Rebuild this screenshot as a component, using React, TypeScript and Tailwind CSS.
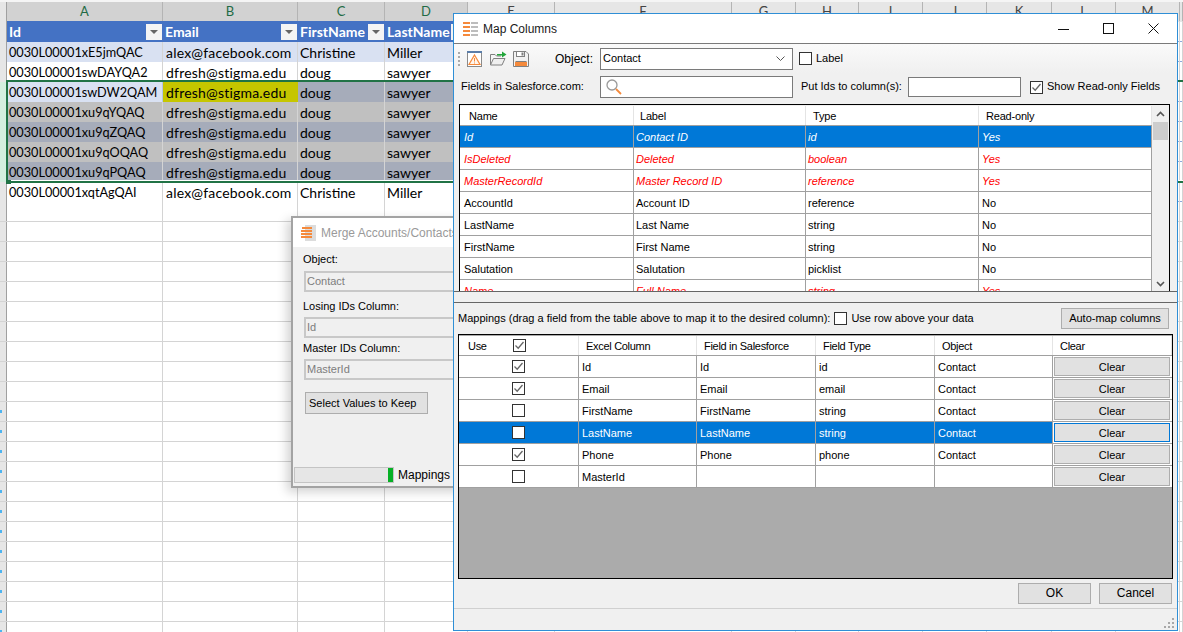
import React from "react";

const sheetRows = [
  ["0030L00001xE5jmQAC", "alex@facebook.com", "Christine", "Miller"],
  ["0030L00001swDAYQA2", "dfresh@stigma.edu", "doug", "sawyer"],
  ["0030L00001swDW2QAM", "dfresh@stigma.edu", "doug", "sawyer"],
  ["0030L00001xu9qYQAQ", "dfresh@stigma.edu", "doug", "sawyer"],
  ["0030L00001xu9qZQAQ", "dfresh@stigma.edu", "doug", "sawyer"],
  ["0030L00001xu9qOQAQ", "dfresh@stigma.edu", "doug", "sawyer"],
  ["0030L00001xu9qPQAQ", "dfresh@stigma.edu", "doug", "sawyer"],
  ["0030L00001xqtAgQAI", "alex@facebook.com", "Christine", "Miller"],
];

const rowColors = [
  "bg-[#d9e1f2]",
  "bg-white",
  "bg-[#a6acba]",
  "bg-[#c0c0c0]",
  "bg-[#a6acba]",
  "bg-[#c0c0c0]",
  "bg-[#a6acba]",
  "bg-white",
];

const letters = ["A", "B", "C", "D", "E", "F", "G", "H", "I", "J", "K", "L", "M", ""];
const gridCols =
  "grid grid-cols-[7px_156px_135px_87px_83px_87px_177px_64px_63px_64px_64px_65px_64px_64px_1fr]";

const fields = [
  ["Id", "Contact ID", "id", "Yes", "sel"],
  ["IsDeleted", "Deleted", "boolean", "Yes", "red"],
  ["MasterRecordId", "Master Record ID", "reference", "Yes", "red"],
  ["AccountId", "Account ID", "reference", "No", ""],
  ["LastName", "Last Name", "string", "No", ""],
  ["FirstName", "First Name", "string", "No", ""],
  ["Salutation", "Salutation", "picklist", "No", ""],
  ["Name", "Full Name", "string", "Yes", "red"],
];

const mappings = [
  { on: true, col: "Id", field: "Id", type: "id", obj: "Contact" },
  { on: true, col: "Email", field: "Email", type: "email", obj: "Contact" },
  { on: false, col: "FirstName", field: "FirstName", type: "string", obj: "Contact" },
  { on: false, col: "LastName", field: "LastName", type: "string", obj: "Contact", sel: true },
  { on: true, col: "Phone", field: "Phone", type: "phone", obj: "Contact" },
  { on: false, col: "MasterId", field: "", type: "", obj: "" },
];

const upperCols = "grid grid-cols-[174px_172px_173px_173px]";
const lowerCols = "grid grid-cols-[120px_118px_119px_119px_118px_1fr]";

function CheckBox({ on }: { on: boolean }) {
  return (
    <span className="flex h-[13px] w-[13px] items-center justify-center border border-[#333] bg-white">
      {on && (
        <svg width="11" height="11" viewBox="0 0 11 11" fill="none">
          <path d="M1.5 5.5 L4.2 8.2 L9.5 2" stroke="#666" strokeWidth="1.3" />
        </svg>
      )}
    </span>
  );
}

function FilterButton() {
  return (
    <span className="absolute right-[1px] top-[3px] flex h-[16px] w-[16px] items-center justify-center bg-[#f4f4f4]">
      <span className="h-0 w-0 border-x-[4px] border-t-[4px] border-x-transparent border-t-[#666]" />
    </span>
  );
}

function ColumnsIcon() {
  return (
    <svg className="shrink-0" width="15" height="14" viewBox="0 0 15 14">
      <rect x="0" y="0" width="7" height="2" fill="#f58a3c" />
      <rect x="8" y="0" width="7" height="2" fill="#bdbdbd" />
      <rect x="0" y="4" width="7" height="2" fill="#f58a3c" />
      <rect x="8" y="4" width="7" height="2" fill="#bdbdbd" />
      <rect x="0" y="8" width="7" height="2" fill="#f58a3c" />
      <rect x="8" y="8" width="7" height="2" fill="#bdbdbd" />
      <rect x="0" y="12" width="7" height="2" fill="#f58a3c" />
      <rect x="8" y="12" width="7" height="2" fill="#bdbdbd" />
    </svg>
  );
}

function MergeIcon() {
  return (
    <svg className="shrink-0" width="15" height="16" viewBox="0 0 15 16">
      <rect x="4" y="0" width="11" height="16" fill="#dcdcdc" />
      <rect x="1" y="2" width="10" height="2" fill="#f58a3c" />
      <rect x="0" y="5" width="11" height="2" fill="#f58a3c" />
      <rect x="0" y="8" width="11" height="2" fill="#f58a3c" />
      <rect x="0" y="11" width="11" height="2" fill="#f58a3c" />
    </svg>
  );
}

function WarnIcon() {
  return (
    <svg width="16" height="16" viewBox="0 0 16 16" fill="none">
      <rect x="0.5" y="0.5" width="14" height="15" fill="#fff" stroke="#8a8a8a" />
      <rect x="0" y="0" width="15" height="2" fill="#5b7da8" />
      <path d="M7.5 4 L13 13.5 H2 Z" stroke="#f58a3c" strokeWidth="1.2" fill="#fff6ee" />
      <path d="M7.5 7 V10.5 M7.5 11.5 V12.5" stroke="#f58a3c" />
    </svg>
  );
}

function OpenIcon() {
  return (
    <svg width="17" height="15" viewBox="0 0 17 15" fill="none">
      <path d="M0.5 14 V3.5 H5 L6.5 5 H11" stroke="#808080" />
      <path d="M0.5 14 L3.5 7.5 H15 L12 14 Z" fill="#efefef" stroke="#808080" />
      <path d="M7 3 H12 V0.5 L16.5 3.5 L12 6.5 V4.5 H7 Z" fill="#22a53a" />
    </svg>
  );
}

function SaveIcon() {
  return (
    <svg width="16" height="16" viewBox="0 0 16 16" fill="none">
      <path d="M0.5 0.5 H13 L15.5 3 V15.5 H0.5 Z" fill="#f2f2f2" stroke="#808080" />
      <rect x="3.5" y="0.5" width="8" height="5" fill="#fff" stroke="#808080" />
      <rect x="8.5" y="1.5" width="2" height="3" fill="#808080" />
      <rect x="2" y="11" width="12" height="4" fill="#f58a3c" />
      <path d="M2.5 10.5 H13.5" stroke="#808080" />
    </svg>
  );
}

function SearchIcon() {
  return (
    <svg width="18" height="18" viewBox="0 0 18 18" fill="none">
      <circle cx="7" cy="7" r="5" stroke="#9a9a9a" strokeWidth="1.3" />
      <path d="M11 11 L16 16" stroke="#f58a3c" strokeWidth="1.8" />
    </svg>
  );
}

function Sheet() {
  return (
    <div className="relative h-[632px] w-[1183px] overflow-hidden bg-white font-['Lato',sans-serif] text-[14px] text-black">
      <div className="h-[2px] bg-[#f5f5f5]" />
      <div className={`${gridCols} h-[18px] text-[13px] text-[#444]`}>
        <div className="border-r border-[#a0a0a0] bg-[#e6e6e6]" />
        {letters.map((l, i) => (
          <div
            key={l}
            className={
              i < 4
                ? "flex items-center justify-center border-r border-[#b4b4b4] bg-[#d2d2d2] text-[#1f6b45]"
                : "flex items-center justify-center border-r border-[#b4b4b4] bg-[#e6e6e6]"
            }
          >
            {l}
          </div>
        ))}
        <div className="bg-[#e6e6e6]" />
      </div>
      <div className="h-[1px] bg-[#217346]" />
      {/* table header */}
      <div className={`${gridCols} h-[21px] border-b border-[#8ea9db]`}>
        <div className="border-r border-[#a0a0a0] bg-[#e6e6e6]" />
        {["Id", "Email", "FirstName", "LastName"].map((h) => (
          <div key={h} className="relative flex items-center bg-[#4472c4] pl-[2px] font-bold text-white">
            {h}
            <FilterButton />
          </div>
        ))}
        {letters.slice(4).map((l) => (
          <div key={l} className="border-r border-[#d4d4d4]" />
        ))}
      </div>
      {/* data rows */}
      {sheetRows.map((row, r) => (
        <div key={row[0]} className={`${gridCols} h-[20px] border-b border-[#8ea9db]`}>
          <div
            className={
              r >= 2 && r <= 6
                ? "border-r border-[#a0a0a0] bg-[#d4efdf]"
                : "border-r border-[#a0a0a0] bg-[#e6e6e6]"
            }
          />
          {row.map((c, i) => (
            <div
              key={i}
              className={
                r === 2 && i === 0
                  ? "flex items-center border-r border-[#b4c6e7] bg-[#d9e1f2] pb-[2px] pl-[2px] text-[12.7px]"
                  : r === 2 && i === 1
                    ? "flex items-center bg-[#c6c600] pb-[2px] pl-[3px] tracking-[0.2px]"
                    : i === 0
                      ? `flex items-center border-r border-[#d4d4d4] pb-[2px] pl-[2px] text-[12.7px] ${rowColors[r]}`
                      : i === 1
                        ? `flex items-center border-r border-[#d4d4d4] pb-[2px] pl-[3px] tracking-[0.2px] ${rowColors[r]}`
                        : `flex items-center border-r border-[#d4d4d4] pb-[2px] pl-[2px] ${rowColors[r]}`
              }
            >
              {c}
            </div>
          ))}
          {letters.slice(4).map((l) => (
            <div key={l} className="border-r border-[#d4d4d4]" />
          ))}
        </div>
      ))}
      {/* empty rows */}
      {Array.from({ length: 22 }).map((_, r) => (
        <div key={r} className={`${gridCols} h-[20px] border-b border-[#d4d4d4]`}>
          <div className="flex items-center border-r border-[#a0a0a0] bg-[#e6e6e6]">
            {r > 9 && <span className="h-[3px] w-[2px] bg-[#4db4f0]" />}
          </div>
          {letters.map((l) => (
            <div key={l} className="border-r border-[#d4d4d4]" />
          ))}
        </div>
      ))}
      {/* selection */}
      <div className="absolute left-[6px] right-[-4px] top-[80px] h-[103px] border-2 border-[#217346]">
        <div className="h-full border-b border-white" />
      </div>
      <div className="absolute left-[6px] top-[180px] h-[4px] w-[5px] bg-[#217346]" />
    </div>
  );
}

function MergeWindow() {
  return (
    <div className="absolute left-[291px] top-[216px] flex h-[272px] w-[175px] flex-col border-2 border-[#a3a3a3] bg-[#f0f0f0] font-['Liberation_Sans',sans-serif] text-[11px] shadow-[-4px_4px_10px_rgba(0,0,0,0.18)]">
      <div className="flex h-[29px] shrink-0 items-center gap-[5px] bg-white pl-[8px] text-[12px] text-[#9a9a9a]">
        <MergeIcon />
        <span className="whitespace-nowrap">Merge Accounts/Contacts</span>
      </div>
      <div className="flex flex-1 flex-col pl-[10px]">
        <div className="mt-[5px] h-[15px] leading-[15px]">Object:</div>
        <div className="ml-[1px] mt-[4px] flex h-[21px] items-center border-2 border-[#c8c8c8] pl-[1px] text-[#7d7d7d]">Contact</div>
        <div className="mt-[7px] h-[15px] leading-[15px]">Losing IDs Column:</div>
        <div className="ml-[1px] mt-[3px] flex h-[21px] items-center border-2 border-[#c8c8c8] pl-[1px] text-[#7d7d7d]">Id</div>
        <div className="mt-[3px] h-[15px] leading-[15px]">Master IDs Column:</div>
        <div className="ml-[1px] mt-[3px] flex h-[21px] items-center border-2 border-[#c8c8c8] pl-[1px] text-[#7d7d7d]">MasterId</div>
        <button className="ml-[2px] mt-[12px] h-[22px] w-[123px] whitespace-nowrap border border-[#adadad] bg-[#e1e1e1] pl-[3px] text-left">Select Values to Keep</button>
      </div>
      <div className="mb-[3px] ml-[1px] flex h-[17px] items-center">
        <div className="flex h-[16px] w-[100px] justify-end border border-[#c4c4c4] bg-[#e6e6e6]">
          <div className="w-[5px] bg-[#06b025]" />
        </div>
        <span className="ml-[4px] whitespace-nowrap text-[12px]">Mappings</span>
      </div>
    </div>
  );
}

function MapColumns() {
  return (
    <div className="absolute left-[453px] top-[13px] flex h-[618px] w-[725px] flex-col border border-[#2f8fd6] bg-[#f0f0f0] font-['Liberation_Sans',sans-serif] text-[11px] text-black">
      {/* title bar */}
      <div className="flex h-[30px] shrink-0 items-center border-b border-[#7a7a7a] bg-white pl-[9px]">
        <ColumnsIcon />
        <span className="ml-[5px] text-[12px] text-[#1a1a1a]">Map Columns</span>
        <div className="ml-auto flex items-center gap-[34px] pr-[18px]">
          <svg width="11" height="11" viewBox="0 0 11 11"><path d="M0 6.5 H11" stroke="#111" /></svg>
          <svg width="11" height="11" viewBox="0 0 11 11" fill="none"><rect x="0.5" y="0.5" width="10" height="10" stroke="#111" /></svg>
          <svg width="11" height="11" viewBox="0 0 11 11" fill="none"><path d="M0.5 0.5 L10.5 10.5 M10.5 0.5 L0.5 10.5" stroke="#111" /></svg>
        </div>
      </div>
      {/* toolbar */}
      <div className="flex h-[29px] shrink-0 items-center bg-gradient-to-b from-[#fafafa] to-[#f0f0f0] pl-[4px]">
        <span className="h-[14px] w-[2px] border-l-2 border-dotted border-[#aaa]" />
        <span className="ml-[7px]"><WarnIcon /></span>
        <span className="ml-[7px]"><OpenIcon /></span>
        <span className="ml-[6px]"><SaveIcon /></span>
        <span className="ml-[26px] w-[45px] text-[12px]">Object:</span>
        <div className="flex h-[22px] w-[193px] items-center justify-between border border-[#7a7a7a] bg-white pl-[2px] pr-[7px]">
          Contact
          <svg width="9" height="6" viewBox="0 0 9 6" fill="none"><path d="M0.5 0.5 L4.5 4.5 L8.5 0.5" stroke="#555" /></svg>
        </div>
        <span className="ml-[6px]"><CheckBox on={false} /></span>
        <span className="ml-[4px]">Label</span>
      </div>
      {/* search row */}
      <div className="flex h-[31px] shrink-0 items-center pb-[3px] pl-[7px]">
        <span className="w-[139px] pb-[2px]">Fields in Salesforce.com:</span>
        <div className="flex h-[22px] w-[193px] items-center border border-[#7a7a7a] bg-white pl-[4px]"><SearchIcon /></div>
        <span className="ml-[8px] w-[107px] whitespace-nowrap pb-[2px]">Put Ids to column(s):</span>
        <div className="h-[20px] w-[113px] border border-[#7a7a7a] bg-white" />
        <span className="ml-[9px]"><CheckBox on /></span>
        <span className="ml-[4px] whitespace-nowrap pb-[2px]">Show Read-only Fields</span>
      </div>
      {/* fields grid */}
      <div className="ml-[5px] h-[187px] w-[711px] shrink-0 overflow-hidden border-x border-t border-black pt-[1px]">
        <div className="flex">
          <div className="w-[692px]">
            <div className={`${upperCols} h-[20px] border-b border-[#a0a0a0] bg-white tracking-[-0.2px]`}>
              <div className="flex items-center border-r border-[#e4e4e4] pl-[9px] pt-[2px]">Name</div>
              <div className="flex items-center border-r border-[#e4e4e4] pl-[6px] pt-[2px]">Label</div>
              <div className="flex items-center border-r border-[#e4e4e4] pl-[7px] pt-[2px]">Type</div>
              <div className="flex items-center border-r border-[#e4e4e4] pl-[7px] pt-[2px]">Read-only</div>
            </div>
            {fields.map((f) => (
              <div
                key={f[0]}
                className={
                  f[4] === "sel"
                    ? `${upperCols} h-[22px] border-b border-[#a0a0a0] bg-[#0078d7] italic text-white`
                    : f[4] === "red"
                      ? `${upperCols} h-[22px] border-b border-[#a0a0a0] bg-white italic text-[#ff0000]`
                      : `${upperCols} h-[22px] border-b border-[#a0a0a0] bg-white`
                }
              >
                <div className="flex items-center border-r border-[#a0a0a0] pl-[4px] pt-[1px]">{f[0]}</div>
                <div className="flex items-center border-r border-[#a0a0a0] pl-[2px] pt-[1px]">{f[1]}</div>
                <div className="flex items-center border-r border-[#a0a0a0] pl-[2px] pt-[1px]">{f[2]}</div>
                <div className="flex items-center border-r border-[#a0a0a0] pl-[3px] pt-[1px]">{f[3]}</div>
              </div>
            ))}
          </div>
          {/* scrollbar */}
          <div className="flex h-[186px] w-[17px] flex-col items-center bg-[#f0f0f0]">
            <svg className="mt-[5px]" width="9" height="6" viewBox="0 0 9 6" fill="none"><path d="M1 5 L4.5 1.5 L8 5" stroke="#555" strokeWidth="1.6" /></svg>
            <div className="mt-[5px] h-[18px] w-[15px] bg-[#cdcdcd]" />
            <svg className="mb-[5px] mt-auto" width="9" height="6" viewBox="0 0 9 6" fill="none"><path d="M1 1 L4.5 4.5 L8 1" stroke="#555" strokeWidth="1.6" /></svg>
          </div>
        </div>
      </div>
      {/* splitter */}
      <div className="h-[12px] shrink-0 border-y border-[#666] bg-[#f0f0f0]" />
      {/* mappings header */}
      <div className="flex h-[31px] shrink-0 items-center pl-[4px]">
        <span className="whitespace-nowrap">Mappings (drag a field from the table above to map it to the desired column):</span>
        <span className="ml-[4px]"><CheckBox on={false} /></span>
        <span className="ml-[4px] whitespace-nowrap">Use row above your data</span>
        <button className="ml-auto mr-[8px] h-[21px] w-[108px] whitespace-nowrap border border-[#adadad] bg-[#e1e1e1]">Auto-map columns</button>
      </div>
      {/* mappings grid */}
      <div className="ml-[4px] flex h-[245px] w-[715px] shrink-0 flex-col border border-black bg-[#ababab] pt-[1px]">
        <div className={`${lowerCols} h-[20px] border-b border-[#a0a0a0] bg-white tracking-[-0.3px]`}>
          <div className="flex items-center border-r border-[#e4e4e4] pl-[9px]">
            <span className="w-[45px] pt-[2px]">Use</span>
            <CheckBox on />
          </div>
          {["Excel Column", "Field in Salesforce", "Field Type", "Object", "Clear"].map((h) => (
            <div key={h} className="flex items-center border-r border-[#e4e4e4] pl-[7px] pt-[2px]">{h}</div>
          ))}
        </div>
        {mappings.map((m) => (
          <div
            key={m.col}
            className={
              m.sel
                ? `${lowerCols} h-[22px] border-b border-[#a0a0a0] bg-white text-white`
                : `${lowerCols} h-[22px] border-b border-[#a0a0a0] bg-white`
            }
          >
            <div className={m.sel ? "flex items-center border-r border-[#a0a0a0] bg-[#0078d7] pl-[53px]" : "flex items-center border-r border-[#a0a0a0] pl-[53px]"}>
              <CheckBox on={m.on} />
            </div>
            {[m.col, m.field, m.type, m.obj].map((c, i) => (
              <div key={i} className={m.sel ? "flex items-center border-r border-[#a0a0a0] bg-[#0078d7] pl-[3px] pt-[1px]" : "flex items-center border-r border-[#a0a0a0] pl-[3px] pt-[1px]"}>{c}</div>
            ))}
            <div className="flex items-center pl-[1px] pr-[2px]">
              <button className={m.sel ? "h-[19px] w-full border border-[#0078d7] bg-[#e1e1e1] pt-[1px] text-black" : "h-[19px] w-full border border-[#adadad] bg-[#e1e1e1] pt-[1px]"}>Clear</button>
            </div>
          </div>
        ))}
      </div>
      {/* footer */}
      <div className="flex h-[30px] shrink-0 items-center justify-end gap-[8px] border-b border-[#d0d0d0] pb-[1px] pr-[5px]">
        <button className="h-[21px] w-[73px] border border-[#adadad] bg-[#e1e1e1] text-[12px]">OK</button>
        <button className="h-[21px] w-[73px] border border-[#adadad] bg-[#e1e1e1] text-[12px]">Cancel</button>
      </div>
      <div className="flex flex-1 items-end justify-end pb-[1px] pr-[2px]">
        <svg width="11" height="11" viewBox="0 0 11 11" fill="#a8a8a8">
          <rect x="8" y="0" width="2" height="2" />
          <rect x="4" y="4" width="2" height="2" />
          <rect x="8" y="4" width="2" height="2" />
          <rect x="0" y="8" width="2" height="2" />
          <rect x="4" y="8" width="2" height="2" />
          <rect x="8" y="8" width="2" height="2" />
        </svg>
      </div>
    </div>
  );
}

export default function App() {
  return (
    <div className="relative h-[632px] w-[1183px] overflow-hidden">
      <Sheet />
      <MergeWindow />
      <MapColumns />
    </div>
  );
}
